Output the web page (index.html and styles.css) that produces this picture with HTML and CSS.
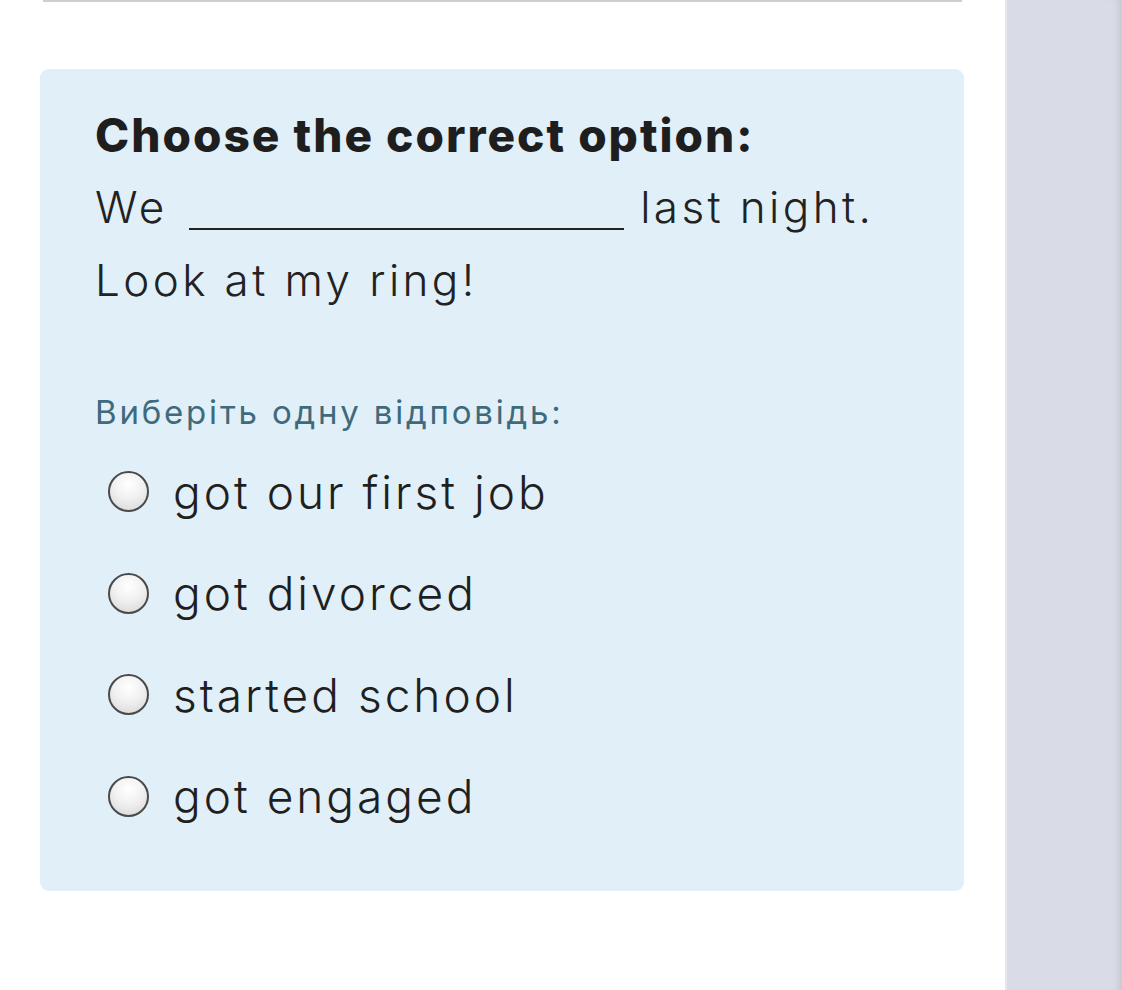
FILE: index.html
```html
<!DOCTYPE html>
<html lang="uk">
<head>
<meta charset="utf-8">
<title>Quiz</title>
<link rel="stylesheet" href="styles.css">
</head>
<body>
<div class="page">
  <main class="main">
    <div class="top-rule"></div>
    <section class="card">
      <h2 class="title">Choose the correct option:</h2>
      <p class="question">We <span class="blank"></span> last night.<br>Look at my ring!</p>
      <p class="hint">Виберіть одну відповідь:</p>
      <ul class="options">
        <li class="option"><span class="radio"></span><span class="label">got our first job</span></li>
        <li class="option"><span class="radio"></span><span class="label">got divorced</span></li>
        <li class="option"><span class="radio"></span><span class="label">started school</span></li>
        <li class="option"><span class="radio"></span><span class="label">got engaged</span></li>
      </ul>
    </section>
  </main>
  <aside class="sidebar"></aside>
</div>
</body>
</html>
```
FILE: styles.css
```css
html, body {
  margin: 0;
  padding: 0;
  height: 100%;
  background: #ffffff;
}
body {
  font-family: Inter, "Open Sans", "DejaVu Sans", sans-serif;
  font-variant-ligatures: none;
  color: #222222;
}
.page {
  display: flex;
  min-height: 990px;
}
.main {
  width: 1005px;
  flex: none;
  padding: 0 41px 0 40px;
  box-sizing: border-box;
  background: #ffffff;
}
.top-rule {
  height: 2px;
  margin: 0 2px 0 3px;
  background: #cfcfcf;
}
.card {
  margin-top: 67px;
  background: #e1eff8;
  border-radius: 9px;
  padding: 36px 55px 50px 55px;
  height: 822px;
  box-sizing: border-box;
}
.title {
  margin: 0;
  font-size: 46px;
  font-weight: 800;
  letter-spacing: 2px;
  line-height: 60px;
  color: #1e1e1e;
}
.question {
  margin: 6px 0 0 0;
  font-size: 44px;
  font-weight: 300;
  letter-spacing: 3.4px;
  line-height: 73px;
  color: #222222;
}
.blank {
  display: inline-block;
  width: 435px;
  height: 34px;
  border-bottom: 2px solid #222222;
  margin: 0 0 0 6px;
  vertical-align: -7px;
}
.hint {
  margin: 70px 0 0 0;
  font-size: 33px;
  font-weight: 400;
  letter-spacing: 2.8px;
  line-height: 50px;
  color: #3f6a7c;
}
.options {
  list-style: none;
  margin: 4px 0 0 0;
  padding: 0;
  display: flex;
  flex-direction: column;
}
.option {
  display: flex;
  align-items: center;
  height: 101.5px;
  gap: 24px;
  padding-left: 13px;
}
.radio {
  width: 37px;
  height: 37px;
  border-radius: 50%;
  border: 2.5px solid #4a4a4a;
  background: radial-gradient(circle at 50% 30%, #ffffff 0%, #f1f1f1 45%, #d4d4d4 100%);
  flex: none;
}
.label {
  font-size: 46px;
  font-weight: 300;
  letter-spacing: 3px;
  color: #1f1f1f;
  line-height: 60px;
}
.sidebar {
  flex: 1;
  background: #d9dbe6;
  box-shadow: inset -8px 0 8px -6px rgba(0, 0, 0, 0.12), inset 2px 0 0 #e6e7ee;
}
```
